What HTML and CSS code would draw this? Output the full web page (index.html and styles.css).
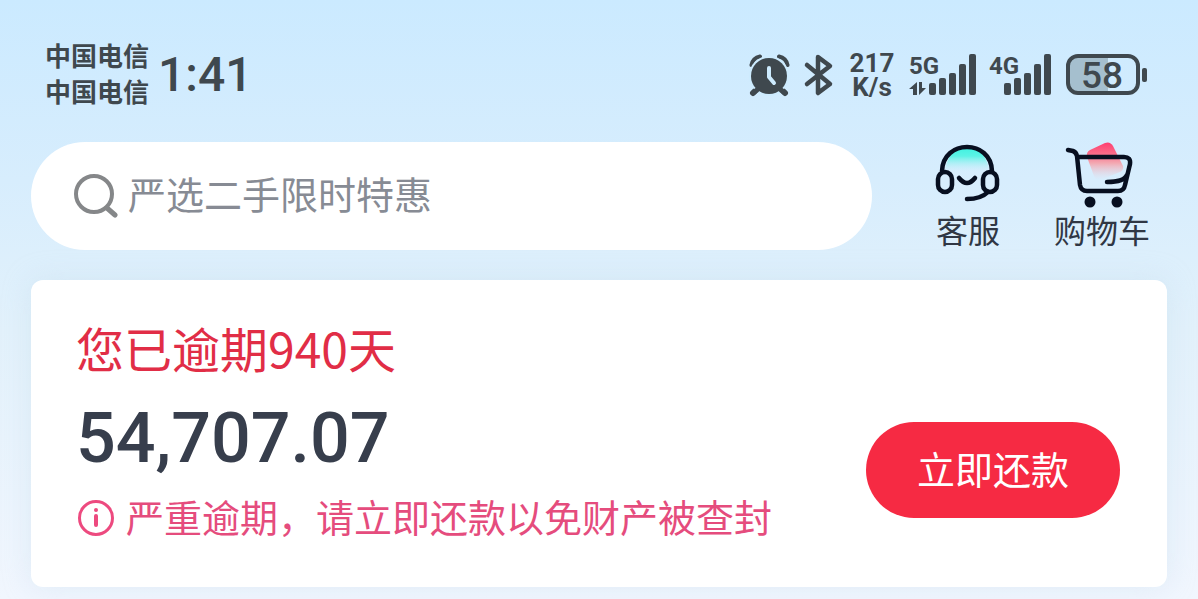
FILE: index.html
```html
<!DOCTYPE html>
<html lang="zh-CN">
<head>
<meta charset="utf-8">
<meta name="viewport" content="width=device-width, initial-scale=1">
<title>首页</title>
<link rel="stylesheet" href="styles.css">
</head>
<body>
<div class="status">
  <div class="carriers"><span>中国电信</span><span>中国电信</span></div>
  <time class="clock">1:41</time>
  <div class="indicators">
    <svg class="alarm" width="42" height="42" viewBox="0 0 42 42" aria-hidden="true">
      <path d="M2.500 11Q4 4 11 2.500M30 2.500Q37 4 38.500 11" fill="none" stroke="currentColor" stroke-width="4" stroke-linecap="round"/>
      <path d="M8 35l-4 4M32 35l4 4" stroke="currentColor" stroke-width="6" stroke-linecap="round"/>
      <circle cx="20" cy="22" r="20" fill="#cdebfe"/>
      <circle cx="20" cy="22" r="18" fill="currentColor"/>
      <path d="M8 36l-4 3M32 36l4 3" stroke="currentColor" stroke-width="5" stroke-linecap="round"/>
      <path d="M20 14v9l5 6" fill="none" stroke="#cdebfe" stroke-width="4" stroke-linecap="round" stroke-linejoin="round"/>
    </svg>
    <svg class="bluetooth" width="28" height="42" viewBox="0 0 28 42" aria-hidden="true">
      <path d="M2 11l23 19-12 9V3l12 9L2 30" fill="none" stroke="currentColor" stroke-width="4.500" stroke-linejoin="round" stroke-linecap="round"/>
    </svg>
    <div class="speed"><span>217</span><span>K/s</span></div>
    <svg class="signal" width="67" height="42" viewBox="0 0 67 42">
      <text class="network" x="0" y="20">5G</text>
      <path d="M8 28v13H4v-6H0zM10 28v13l7-7H13v-6z" fill="currentColor"/>
      <g fill="currentColor"><rect x="20" y="29" width="7" height="12" rx="2"/><rect x="30" y="24" width="7" height="17" rx="2"/><rect x="40" y="19" width="7" height="22" rx="2"/><rect x="50" y="10" width="7" height="31" rx="2"/><rect x="60" y="0" width="7" height="41" rx="2"/></g>
    </svg>
    <svg class="signal" width="62" height="42" viewBox="0 0 62 42">
      <text class="network" x="0" y="20">4G</text>
      <g fill="currentColor"><rect x="15" y="29" width="7" height="12" rx="2"/><rect x="25" y="24" width="7" height="17" rx="2"/><rect x="35" y="19" width="7" height="22" rx="2"/><rect x="45" y="10" width="7" height="31" rx="2"/><rect x="55" y="0" width="7" height="41" rx="2"/></g>
    </svg>
    <svg class="battery" width="82" height="42" viewBox="0 0 82 42">
      <path d="M12 2H42V39H12Q2 39 2 29V12Q2 2 12 2" fill="#a5bfce"/>
      <rect x="2" y="2" width="70" height="37" rx="10" fill="none" stroke="currentColor" stroke-width="4"/>
      <rect x="76" y="14" width="5" height="14" rx="2" fill="currentColor"/>
      <text class="level" x="36" y="34" text-anchor="middle">58</text>
    </svg>
  </div>
</div>

<header class="toolbar">
  <form class="search" role="search">
    <svg width="44" height="44" viewBox="0 0 44 44" aria-hidden="true"><circle cx="20" cy="20" r="18" fill="none" stroke="#858789" stroke-width="4"/><path d="M33 34l8 7" stroke="#858789" stroke-width="5" stroke-linecap="round"/></svg>
    <input type="search" aria-label="搜索" placeholder="严选二手限时特惠">
  </form>
  <nav class="shortcuts">
    <a href="#service">
      <svg width="64" height="66" viewBox="1 -1 64 66" aria-hidden="true">
        <defs><linearGradient id="mint" x1="0" y1="0" x2="0" y2="1"><stop offset="0" stop-color="#3df2e0"/><stop offset=".35" stop-color="#5cf3e5"/><stop offset="1" stop-color="#d7eefe" stop-opacity="0"/></linearGradient></defs>
        <path d="M10 31a22 26 0 0 1 44 0z" fill="url(#mint)"/>
        <g fill="none" stroke="#070f20" stroke-width="4.500" stroke-linecap="round">
          <path d="M7 29C8 -3 56 -3 57 29M53 50Q46 57 32 57M24 36Q32 46 40 36"/>
          <rect x="3" y="30" width="14" height="20" rx="7"/><rect x="48" y="30" width="14" height="20" rx="7"/>
        </g>
      </svg>
      <span>客服</span>
    </a>
    <a href="#cart">
      <svg width="70" height="66" viewBox="3 -1 70 66" aria-hidden="true">
        <defs><linearGradient id="rose" x1="0" y1="0" x2="0" y2="1"><stop offset="0" stop-color="#ff3e70"/><stop offset=".3" stop-color="#fa6c88"/><stop offset=".55" stop-color="#f3a9b2"/><stop offset="1" stop-color="#e6dce8" stop-opacity="0"/></linearGradient></defs>
        <path d="M26 8L41 1Q46 -1 49 4L59 24Q60 28 56 30L36 38Q32 39 30 34L23 15Q22 10 26 8" fill="url(#rose)"/>
        <path d="M4 8L9 9Q12 10 13 14L16 43Q17 49 23 49H54Q60 49 61 43L66 22Q67 15 60 15H14M63 33Q60 40 43 40" fill="none" stroke="#070f20" stroke-width="4.500" stroke-linecap="round" stroke-linejoin="round"/>
        <circle cx="26" cy="60" r="5.500" fill="#070f20"/><circle cx="53" cy="60" r="5.500" fill="#070f20"/>
      </svg>
      <span>购物车</span>
    </a>
  </nav>
</header>

<main class="card">
  <div class="debt">
    <h1 class="overdue">您已逾期940天</h1>
    <p class="amount">54,707.07</p>
    <p class="warning">
      <svg width="38" height="38" viewBox="0 0 38 38" aria-hidden="true"><circle cx="20" cy="19" r="16.500" fill="none" stroke="#ed4a7f" stroke-width="3"/><circle cx="20" cy="11" r="2" fill="#ed4a7f"/><path d="M20 17v9" fill="none" stroke="#ed4a7f" stroke-width="4" stroke-linecap="round"/></svg>
      <span>严重逾期，请立即还款以免财产被查封</span>
    </p>
  </div>
  <button class="pay" type="button">立即还款</button>
</main>
</body>
</html>
```
FILE: styles.css
```css
* { box-sizing: border-box; }

body {
  margin: 0;
  min-height: 100vh;
  padding: 40px 31px 12px;
  background: linear-gradient(#cbeaff 0, #d7edfd 180px, #e2f1fb 330px, #f1f6fe 599px);
  font-family: Roboto, "Noto Sans CJK SC", sans-serif;
  color: #3f484e;
}

h1, p { margin: 0; font-weight: 400; }

.status {
  display: flex;
  align-items: center;
  height: 70px;
  padding: 0 19px 0 14px;
}

.carriers {
  display: flex;
  flex-direction: column;
  padding-bottom: 4px;
  font: 700 26px/36px "Noto Sans CJK SC", sans-serif;
}

.clock { margin-left: 9px; font-size: 48px; font-weight: 500; line-height: 72px; }

.indicators { display: flex; align-items: center; margin-left: auto; }
.indicators svg { display: block; overflow: visible; }
.bluetooth { margin-left: 14px; }

.speed {
  display: flex;
  flex-direction: column;
  width: 48px;
  margin-left: 15px;
  font-size: 26px;
  font-weight: 700;
  line-height: 24px;
  text-align: center;
}

.signal { margin-left: 13px; }
.battery { margin-left: 15px; }
.network { font-size: 24px; font-weight: 700; fill: currentColor; }
.level { font-size: 37px; font-weight: 500; fill: currentColor; }

.toolbar {
  display: flex;
  align-items: center;
  gap: 64px;
  margin-top: 31px;
  padding-right: 17px;
}

.search {
  display: flex;
  flex: 1;
  align-items: center;
  gap: 10px;
  height: 108px;
  padding: 0 43px;
  border-radius: 54px;
  background: #fff;
}

.search svg { flex: none; }

.search input {
  flex: 1;
  min-width: 0;
  padding: 0 0 6px;
  border: 0;
  outline: 0;
  background: none;
  font: 400 38px/56px "Noto Sans CJK SC", sans-serif;
  color: #3f484e;
}

.search input::placeholder { color: #878b94; opacity: 1; }

.shortcuts { display: flex; gap: 54px; }

.shortcuts a {
  display: flex;
  flex-direction: column;
  align-items: center;
  font: 400 32px/44px "Noto Sans CJK SC", sans-serif;
  color: #303744;
  text-decoration: none;
}

.shortcuts svg { overflow: visible; }

.card {
  display: flex;
  align-items: center;
  justify-content: space-between;
  margin-top: 29px;
  padding: 32px 47px 39px 45px;
  border-radius: 12px;
  background: #fff;
  box-shadow: 0 0 28px rgba(190, 215, 232, .35);
}

.overdue {
  font: 400 48px/70px "Noto Sans CJK SC", sans-serif;
  color: #e12d46;
}

.amount { margin: 7px 0 1px; font-size: 70px; font-weight: 500; line-height: 98px; color: #373e4c; }

.warning {
  display: flex;
  align-items: center;
  gap: 12px;
  font: 400 38px/56px "Noto Sans CJK SC", sans-serif;
  color: #e54c7d;
}

.warning span { padding-bottom: 4px; }

.pay {
  flex: none;
  width: 254px;
  height: 96px;
  margin-top: 80px;
  padding: 0 0 4px;
  border: 0;
  border-radius: 48px;
  background: #f62a43;
  color: #fff;
  font: 400 38px/56px "Noto Sans CJK SC", sans-serif;
}
```
